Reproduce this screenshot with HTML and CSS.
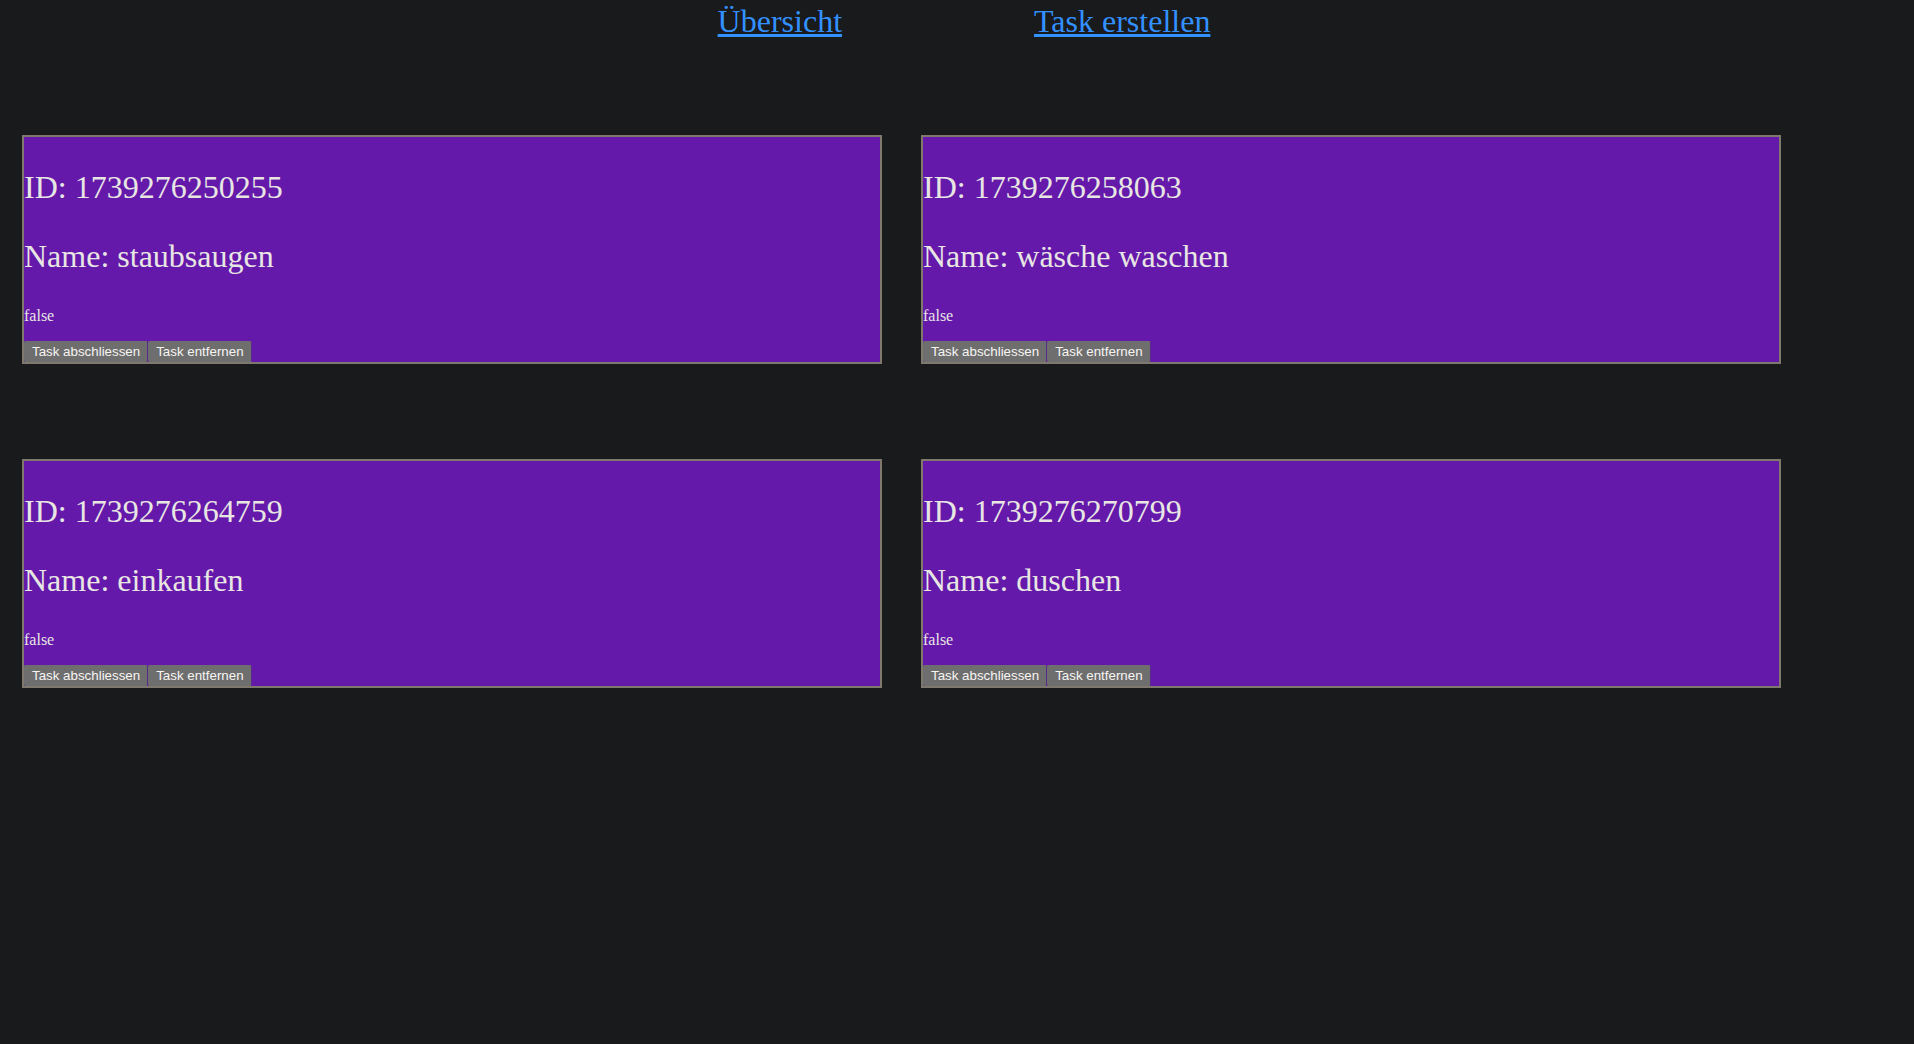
FILE: index.html
```html
<!DOCTYPE html>
<html lang="de">

<head>
  <meta charset="UTF-8">
  <meta name="viewport" content="width=device-width, initial-scale=1.0">
  <title>Tasks</title>
  <link rel="stylesheet" href="styles.css">
</head>

<body>
  <!-- Navigation -->
  <nav class="nav">
    <a href="#">Übersicht</a>
    <a href="#">Task erstellen</a>
  </nav>

  <!-- Task Liste -->
  <div class="task-list">
    <div class="task">
      <p class="task-big">ID: 1739276250255</p>
      <p class="task-big">Name: staubsaugen</p>
      <p class="task-done">false</p>
      <div class="task-actions">
        <button>Task abschliessen</button><button>Task entfernen</button>
      </div>
    </div>
    <div class="task">
      <p class="task-big">ID: 1739276258063</p>
      <p class="task-big">Name: wäsche waschen</p>
      <p class="task-done">false</p>
      <div class="task-actions">
        <button>Task abschliessen</button><button>Task entfernen</button>
      </div>
    </div>
    <div class="task">
      <p class="task-big">ID: 1739276264759</p>
      <p class="task-big">Name: einkaufen</p>
      <p class="task-done">false</p>
      <div class="task-actions">
        <button>Task abschliessen</button><button>Task entfernen</button>
      </div>
    </div>
    <div class="task">
      <p class="task-big">ID: 1739276270799</p>
      <p class="task-big">Name: duschen</p>
      <p class="task-done">false</p>
      <div class="task-actions">
        <button>Task abschliessen</button><button>Task entfernen</button>
      </div>
    </div>
  </div>
</body>

</html>
```

FILE: styles.css
```css
/* Global */
html {
  background-color: #181a1b;
}

body {
  margin: 0;
  padding: 0;
  font-family: "Liberation Serif", "Times New Roman", serif;
  color: #e8e6e3;
  background-color: #181a1b;
}

/* Navigation */
.nav {
  display: flex;
  justify-content: center;
  gap: 192px;
  padding: 3px 0 0 14px;
}

.nav a {
  font-size: 32px;
  color: #3391ff;
  text-decoration: underline;
}

/* Tasks */
.task-list {
  display: grid;
  grid-template-columns: repeat(2, 860px);
  column-gap: 39px;
  row-gap: 95px;
  margin: 95px 0 0 22px;
}

.task {
  box-sizing: border-box;
  background-color: #6419aa;
  border: 2px solid #7f786c;
}

.task-big {
  font-size: 32px;
  margin: 32px 0;
}

.task-done {
  font-size: 16px;
  margin: 32px 0 16px 0;
}

.task-actions {
  display: flex;
}

.task-actions button {
  font-family: "Liberation Sans", Arial, sans-serif;
  font-size: 13.33px;
  color: #f7f5f2;
  background-color: #6e6e6e;
  border: 1px solid #6e6e6e;
  border-right-color: #5a2a8a;
  border-radius: 2px;
  padding: 2px 7px;
  margin: 0;
  cursor: pointer;
}
```
